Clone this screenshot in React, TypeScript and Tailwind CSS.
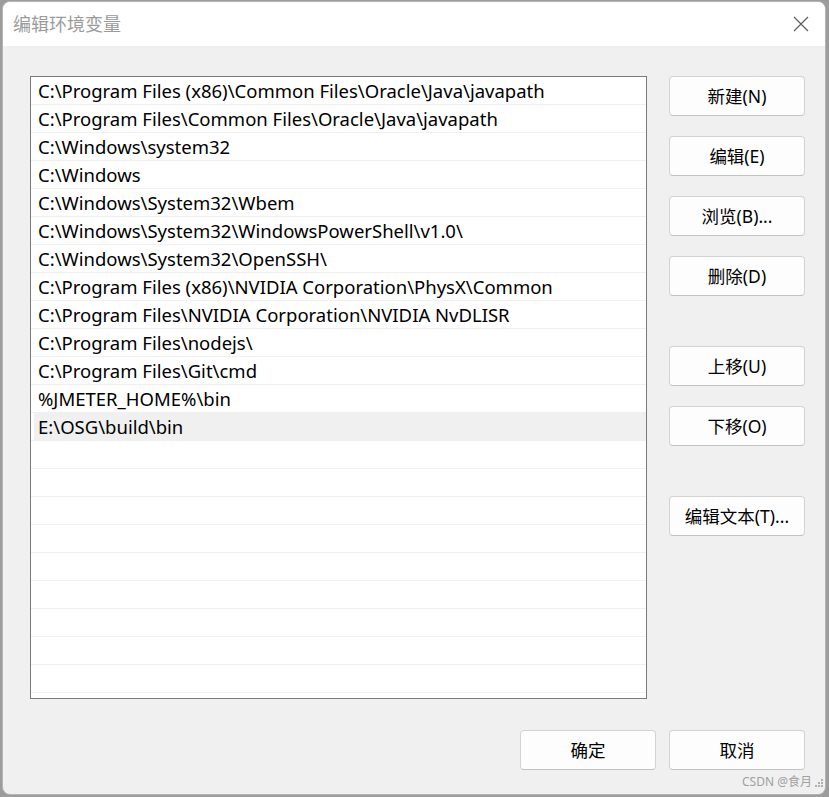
const PATHS = [
  "C:\\Program Files (x86)\\Common Files\\Oracle\\Java\\javapath",
  "C:\\Program Files\\Common Files\\Oracle\\Java\\javapath",
  "C:\\Windows\\system32",
  "C:\\Windows",
  "C:\\Windows\\System32\\Wbem",
  "C:\\Windows\\System32\\WindowsPowerShell\\v1.0\\",
  "C:\\Windows\\System32\\OpenSSH\\",
  "C:\\Program Files (x86)\\NVIDIA Corporation\\PhysX\\Common",
  "C:\\Program Files\\NVIDIA Corporation\\NVIDIA NvDLISR",
  "C:\\Program Files\\nodejs\\",
  "C:\\Program Files\\Git\\cmd",
  "%JMETER_HOME%\\bin",
  "E:\\OSG\\build\\bin",
];

const TOTAL_ROWS = 23;
const SELECTED = 12;

const FONT = { fontFamily: '"Noto Sans", "Noto Sans CJK SC", sans-serif' };

function WinButton({ label, className = "" }: { label: string; className?: string }) {
  return (
    <button
      type="button"
      className={`flex h-10 w-[136px] items-center justify-center rounded-[4px] border border-[#d3d3d3] border-b-[#c2c2c2] bg-[#fdfdfd] text-[17.5px] text-black ${className}`}
    >
      {label}
    </button>
  );
}

export default function App() {
  const rows = Array.from({ length: TOTAL_ROWS }, (_, i) => PATHS[i] ?? "");

  return (
    <div className="h-[797px] w-[829px] overflow-hidden bg-[#9c9c9c] pl-[2px] pt-[1px]" style={FONT}>
      <div className="flex h-[794px] w-[824px] flex-col overflow-hidden rounded-[8px] border border-[#b5b5b5] bg-[#f0f0f0]">
        {/* title bar */}
        <div className="flex h-[44px] shrink-0 items-center justify-between bg-white pl-[10px] pr-[16px]">
          <span className="text-[18px] text-[#9b9b9b]">编辑环境变量</span>
          <svg width="16" height="16" viewBox="0 0 16 16" className="text-[#5c5c5c]">
            <path d="M1 1 L15 15 M15 1 L1 15" stroke="currentColor" strokeWidth="1.2" fill="none" />
          </svg>
        </div>

        <div className="flex flex-1 flex-col">
          <div className="flex gap-[22px] pl-[27px] pt-[30px]">
            {/* path list */}
            <div className="h-[623px] w-[617px] overflow-hidden border border-[#7a7a7a] bg-white">
              {rows.map((path, i) => (
                <div key={i} className="h-[28px] border-b border-[#f0f0f0]">
                  <div
                    className={`ml-[3px] flex h-full items-center pl-[4px] pt-[2px] text-[18.5px] leading-none text-black ${
                      i === SELECTED ? "bg-[#f0f0f0]" : ""
                    }`}
                  >
                    {path}
                  </div>
                </div>
              ))}
            </div>

            {/* side buttons */}
            <div className="flex flex-col">
              <WinButton label="新建(N)" />
              <WinButton label="编辑(E)" className="mt-5" />
              <WinButton label="浏览(B)..." className="mt-5" />
              <WinButton label="删除(D)" className="mt-5" />
              <WinButton label="上移(U)" className="mt-[50px]" />
              <WinButton label="下移(O)" className="mt-5" />
              <WinButton label="编辑文本(T)..." className="mt-[50px]" />
            </div>
          </div>

          <div className="flex justify-end gap-[13px] pr-[20px] pt-[31px]">
            <WinButton label="确定" className="w-[135px]" />
            <WinButton label="取消" className="w-[135px]" />
          </div>

          <div className="flex items-end justify-end pr-[2px] pt-[6px]">
            <span className="text-[12px] leading-none text-[#a0a0a0]">CSDN @食月</span>
            <svg width="8" height="8" viewBox="0 0 8 8" className="mb-[1px] ml-[3px] text-[#b0b0b0]">
              <rect x="6" y="0" width="2" height="2" fill="currentColor" />
              <rect x="3" y="3" width="2" height="2" fill="currentColor" />
              <rect x="6" y="3" width="2" height="2" fill="currentColor" />
              <rect x="0" y="6" width="2" height="2" fill="currentColor" />
              <rect x="3" y="6" width="2" height="2" fill="currentColor" />
              <rect x="6" y="6" width="2" height="2" fill="currentColor" />
            </svg>
          </div>
        </div>
      </div>
    </div>
  );
}
